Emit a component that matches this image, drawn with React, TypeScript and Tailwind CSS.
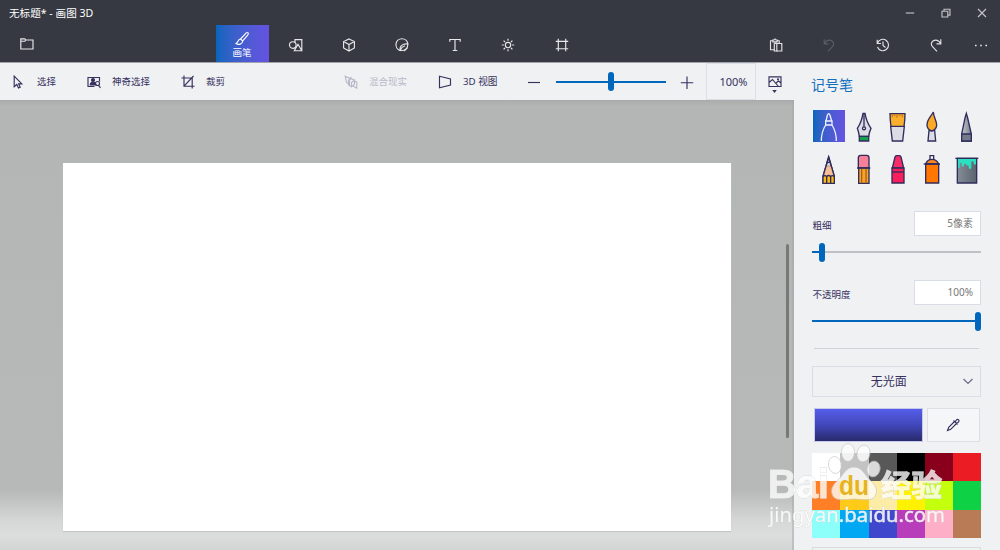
import { ReactNode } from 'react'

type SliderProps = {
  value: string
  fill: string
}

const TOP_ICONS: ReactNode[] = [
  // 2D shapes
  <>
    <circle cx="4.800" cy="8" r="3.300" />
    <path d="M7 5.600V2.600h6.800V13M10 7.300L6.300 13.700h7.500z" />
  </>,
  // 3D shapes
  <path d="M8 2l5.400 2.600v6.400L8 14l-5.400-3V4.600zM2.600 4.600L8 7.500l5.400-2.900M8 7.500V14" />,
  // stickers
  <>
    <path d="M6.500 13.600A6 6 0 1 1 13.900 7" />
    <path d="M6.200 13.400c-1-4 2.500-7.200 7.700-6.400 0 4.500-3 7.200-7.700 6.400zM6.200 13.400C7 11.500 9 9.500 11 8.800" />
    <path d="M10 14.200l3.600-3.600" />
  </>,
  // text
  <path d="M2.800 4.700V2.500h10.400v2.200M8 2.500v11M5.700 13.500h4.600" />,
  // effects
  <>
    <circle cx="8" cy="8" r="2.700" />
    <path d="M8 1.800v2M8 12.200v2M1.800 8h2M12.200 8h2M3.600 3.600L5 5M11 11l1.400 1.400M12.400 3.600L11 5M5 11l-1.400 1.400" />
  </>,
  // canvas
  <path d="M4.300 1.800v2.500H1.800M11.700 1.800v2.500h2.500M4.300 14.200v-2.500H1.800M11.700 14.200v-2.500h2.500M4.300 4.300h7.400v7.400H4.300z" />,
]

const ACTION_ICONS: { color: string; art: ReactNode }[] = [
  {
    color: 'text-[#e2e2e5]',
    art: (
      <>
        <path d="M6 12.700H2.500V3.700h2.300M9 3.700h2.200v2.500M4.800 4.800V3h1.200q1-2 2 0H9.200v1.800zM6.300 6.300v7.700h3.200M6.300 6.300h2.500" />
        <path d="M8.800 6.500h5v7.500h-5z" />
      </>
    ),
  },
  {
    color: 'text-[#5b5d66]',
    art: <path d="M3.200 2.300v4.500h4.300M3.500 6.500C5 3.300 8.500 2.300 10.700 3.800c2.500 1.700 2.500 4 .8 5.800L7 14.300" />,
  },
  {
    color: 'text-[#e2e2e5]',
    art: (
      <>
        <path d="M2.200 2.700v3.800H6M2.500 6a5.700 5.700 0 1 1 0 4" />
        <path d="M8 4.500v4l2.500 2" />
      </>
    ),
  },
  {
    color: 'text-[#e2e2e5]',
    art: <path d="M12.800 2.300v4.500H8.500M12.500 6.500C11 3.300 7.500 2.300 5.300 3.800c-2.500 1.700-2.500 4-.8 5.800L9 14.300" />,
  },
]

const PENS: ReactNode[] = [
  // marker
  <g stroke="#eef0ff" fill="none">
    <path d="M39 33l4-17q4-10 8 0l5 17M38 33h19v12H38zM38 45C28 61 25 75 25 93M57 45c10 16 13 30 13 48" />
  </g>,
  // fountain pen
  <>
    <path d="M45 10h6c3 19 9 32 18 45-4 8-6 16-7 24H34c-1-8-3-16-6-24 9-13 14-26 17-45z" fill="#dcdce4" />
    <path d="M48 10v40" />
    <circle cx="48" cy="55" r="4.500" fill="#fff" />
    <path d="M34 79h28v14H34z" fill="#13a34a" />
  </>,
  // oil brush
  <>
    <path d="M26 49l5 44h31l5-44z" fill="#dcdce4" />
    <path d="M24 11h45c0 15-1 26-3 38H27c-2-12-3-23-3-38z" fill="#fbb02d" />
    <path d="M31 13v9M38 13v6M45 13v10M53 13v6M61 13v9" stroke="#c97c22" />
  </>,
  // watercolor brush
  <>
    <path d="M39 62l-3 31h23l-3-31z" fill="#dcdce4" />
    <path d="M52 6c-6 13-19 21-19 39 0 9 5 15 14 18 10-3 15-9 15-18 0-14-9-22-10-39z" fill="#fbaa27" />
  </>,
  // pixel pen
  <>
    <path d="M46 10l-4 14-10 48v21h29V72L50 24z" fill="url(#steel)" />
    <path d="M32 72h29v21H32z" fill="#747b89" />
  </>,
  // pencil
  <>
    <path d="M47 12L30 70v21h34V70z" fill="#dcdce4" />
    <path d="M39 38q4 4 8 0 4 4 8 0l9 33H30z" fill="#f7bd97" stroke="#a0705d" strokeWidth="2" />
    <path d="M30 71q6-6 11 0 6-7 12 0 5-6 11 0v20H30z" fill="#fdb913" />
    <path d="M47 12L30 70M47 12l17 58M47 12l-5 16h10zM41 71v20M53 71v20" />
  </>,
  // eraser
  <>
    <path d="M31 45V14q0-7 7-7h18q7 0 7 7v31z" fill="#f77f98" />
    <path d="M32 45h31v46H32z" fill="#fca41f" />
    <path d="M41 46v45M54 46v45" stroke="#9c6138" />
    <path d="M27 45h40" />
  </>,
  // crayon
  <>
    <path d="M31 45l8-33q1-4 5-4h8q4 0 5 4l8 33z" fill="#f72c66" />
    <path d="M30 45h36v45H30z" fill="#fb1e5d" />
    <path d="M30 57h36" />
  </>,
  // spray can
  <>
    <path d="M42 8h11v13H42z" fill="#fff" />
    <path d="M29 33q5-14 19-14t20 14z" fill="#fb8426" />
    <path d="M29 33h39v57H29z" fill="#ff7600" />
    <path d="M23 33h49" />
  </>,
  // fill bucket
  <>
    <path d="M19 16h58v74H19z" fill="url(#bucket)" />
    <path
      d="M21 17h54v15q-4 6-7 0v-5q-4-5-7 0v18q-4 6-8 0v-6q-4-5-7 0v-5q-4-4-7 0v5q-4 5-7 0v-8q-4-4-6 0v14l-5-1z"
      fill="#2be0c0"
      stroke="none"
    />
    <path d="M13 16h69" />
  </>,
]

const PALETTE = [
  'bg-white',
  'bg-[#c3c3c3]',
  'bg-[#585858]',
  'bg-black',
  'bg-[#88001b]',
  'bg-[#ec1c24]',
  'bg-[#ff7f27]',
  'bg-[#ffca18]',
  'bg-[#fdeca6]',
  'bg-[#fff200]',
  'bg-[#c4ff0e]',
  'bg-[#0ed145]',
  'bg-[#8cfffb]',
  'bg-[#00a8f3]',
  'bg-[#3f48cc]',
  'bg-[#b83dba]',
  'bg-[#ffaec8]',
  'bg-[#b97a56]',
]

const Icon = ({ children, className = '' }: { children: ReactNode; className?: string }) => (
  <svg
    viewBox="0 0 16 16"
    fill="none"
    stroke="currentColor"
    strokeWidth="1.150"
    className={`h-4 w-4 shrink-0 ${className}`}
  >
    {children}
  </svg>
)

const Slider = ({ value, fill }: SliderProps) => (
  <div className="relative h-5 w-full">
    <div className="absolute top-[9px] h-[2px] w-full bg-[#bfc0c3]" />
    <div className="absolute top-[9px] h-[2px] bg-[#0067bd]" style={{ width: fill }} />
    <div className="absolute top-[0.500px] h-[19px] w-[6.500px] rounded-full bg-[#0067bd]" style={{ left: value }} />
  </div>
)

const Header = () => (
  <header className="h-[62px] shrink-0 bg-[#373942] text-[#e8e8ea]">
    <div className="flex h-[25px] items-center justify-between pt-[2px] pl-[9px]">
      <h1 className="text-[10.600px] leading-none text-white">无标题* - 画图 3D</h1>
      <div className="flex pr-[0.500px] pb-[2px] text-[#c2c3c7]">
        {[
          <path key="min" d="M3.800 8h8.400" />,
          <path key="max" d="M4 6.200h5.800V12H4zM6 6V4.200h6v5.900h-2" />,
          <path key="close" d="M4 4l8 8M12 4l-8 8" />,
        ].map((art, i) => (
          <div key={i} className="flex w-9 justify-center">
            <Icon>{art}</Icon>
          </div>
        ))}
      </div>
    </div>
    <nav className="flex h-[37px] items-center">
      <div className="w-[215.500px] pl-[18.500px]">
        <Icon>
          <path d="M1.800 2.800h4l1 1.200h7.200v9H1.800zM1.800 5.200h4l1-1.200" />
        </Icon>
      </div>
      <div className="flex h-full w-[53px] flex-col items-center bg-linear-to-r from-[#0565bd] to-[#6552e2] pt-[5.500px] text-white">
        <Icon>
          <path d="M14 1.800c.8.700.3 1.600-.3 2.400L8.700 10 6.500 8 12 2.200c.6-.6 1.400-1 2-.4zM6.500 8C4 8 4.500 11 2 12.500c2.500 1.800 6.500.8 6.700-2.500" />
        </Icon>
        <span className="mt-[1px] text-[9.500px] leading-none">画笔</span>
      </div>
      {TOP_ICONS.map((art, i) => (
        <div key={i} className="flex w-[53.200px] justify-center pt-[3px] pl-[1px]">
          <Icon>{art}</Icon>
        </div>
      ))}
      <div className="ml-auto flex items-center pt-[2px]">
        {ACTION_ICONS.map(({ color, art }, i) => (
          <div key={i} className={`flex w-[53.300px] justify-center ${color}`}>
            <Icon>{art}</Icon>
          </div>
        ))}
        <div className="flex w-[37.500px] justify-center">
          <Icon>
            <path d="M2 8.500h1.600M7.200 8.500h1.600M12.400 8.500H14" strokeWidth="1.600" />
          </Icon>
        </div>
      </div>
    </nav>
  </header>
)

const Toolbar = () => (
  <div className="flex h-[38px] shrink-0 items-center border-t border-[#a3a4aa] bg-[#f0f1f3] text-[9.500px] leading-none text-[#37315f]">
    <div className="flex w-[75px] items-center gap-[11px] pl-[10px]">
      <Icon>
        <path d="M4.200 2.200v10.600l2.600-2.300 1.700 3.500 1.700-.8-1.600-3.400h3.200z" />
      </Icon>
      <span>选择</span>
    </div>
    <div className="flex w-[95px] items-center gap-[10px] pl-[11px]">
      <Icon>
        <path d="M8.500 12.500H2v-9h11.500v4" />
        <circle cx="7" cy="6" r="1.500" fill="currentColor" />
        <path d="M4.200 11q.3-3 2.800-3t3 3z" fill="currentColor" />
        <circle cx="11.500" cy="9.500" r="2" />
        <path d="M12.500 11.300l2 2.500" />
      </Icon>
      <span>神奇选择</span>
    </div>
    <div className="flex w-[173px] items-center gap-[10px] pl-[10px]">
      <Icon>
        <path d="M4 1.500v10.700h10.500M1.500 4h10.700v10.500M4.500 11.700l9-9.700" />
      </Icon>
      <span>裁剪</span>
    </div>
    <div className="flex w-[92px] items-center gap-[10px] text-[#b9b8c9]">
      <Icon>
        <path d="M2.200 2.200l4.300 2v6.300L3.500 8.500zM6.500 4.200L8.500 3.300M5.500 6l3-1.300 3 1.500M5.500 6v5l3 1.700M8.500 8.500l3-2.300v4l-3 2.500zM11.500 7l2.300 1.200v6L10 12" />
      </Icon>
      <span>混合现实</span>
    </div>
    <div className="flex w-[91px] items-center gap-[10px] pl-[2px]">
      <Icon>
        <path d="M2.500 2.200l11 2.700v6.200l-11 2.700z" />
      </Icon>
      <span className="text-[9.700px]">3D 视图</span>
    </div>
    <Icon>
      <path d="M2 8.500h12" />
    </Icon>
    <div className="mr-[13.500px] ml-[14px] w-[109.500px]">
      <Slider value="51.5px" fill="100%" />
    </div>
    <Icon>
      <path d="M1.800 8.700h12.400M8 2.500v12.400" />
    </Icon>
    <div className="ml-[10.500px] flex h-full w-[50px] items-center justify-end border border-[#dcdfe8] pr-[7px] text-[11px]">
      100%
    </div>
    <div className="flex flex-1 flex-col items-center pt-1">
      <Icon>
        <path d="M2 2.800h12v9.700H2zM2 8.500l3.500-3 6 7M9 9l2.500-2L14 9" />
        <circle cx="11" cy="5.300" r=".5" />
      </Icon>
      <svg viewBox="0 0 6 4" className="h-[3px] w-[5px] fill-current">
        <path d="M0 0h6L3 4z" />
      </svg>
    </div>
  </div>
)

const ValueRow = ({ label, value }: { label: string; value: string }) => (
  <div className="flex h-[25px] items-center justify-between">
    <span className="pt-[5px] text-[9.500px] text-[#37315f]">{label}</span>
    <div className="flex h-[25px] w-[67px] items-center justify-end border border-[#d9dde8] bg-white pr-[7px] text-[10px] text-[#777]">
      {value}
    </div>
  </div>
)

const SidePanel = () => (
  <aside className="h-[488px] w-[206px] shrink-0 overflow-hidden border-t border-[#a3a4aa] bg-[#f0f1f3] pr-[19px] pl-[18.400px]">
    <h2 className="-ml-[1.500px] pt-[13px] text-[14px] leading-[18px] text-[#1470bd]">记号笔</h2>

    <div className="mt-[16px] ml-[0.800px] grid w-max grid-cols-[repeat(5,32px)] gap-x-[2.400px] gap-y-[11.300px]">
      {PENS.map((art, i) => (
        <svg
          key={i}
          viewBox="0 0 96 96"
          fill="none"
          stroke="#302c5c"
          strokeWidth="4"
          className={`h-8 w-8 ${i === 0 ? 'bg-linear-to-r from-[#0565bd] to-[#6552e2]' : ''}`}
        >
          <defs>
            <linearGradient id="steel" x2="1">
              <stop offset="0" stopColor="#c5c7ce" />
              <stop offset="1" stopColor="#777e8b" />
            </linearGradient>
            <linearGradient id="bucket" x2="1">
              <stop offset="0" stopColor="#858d96" />
              <stop offset="1" stopColor="#59636f" />
            </linearGradient>
          </defs>
          {art}
        </svg>
      ))}
    </div>

    <div className="mt-[26px]">
      <ValueRow label="粗细" value="5像素" />
      <div className="mt-[6px]">
        <Slider value="6.5px" fill="10px" />
      </div>
    </div>
    <div className="mt-[18px]">
      <ValueRow label="不透明度" value="100%" />
      <div className="mt-[6px]">
        <Slider value="162.2px" fill="100%" />
      </div>
    </div>

    <div className="mx-[2px] mt-[17px] border-t border-[#d0d2d6]" />

    <div className="relative mt-[17px] flex h-[31px] items-center justify-center border border-[#d9dde8] pt-[1px] pr-4 text-[12px] text-[#37315f]">
      无光面
      <Icon className="absolute right-1 text-[#6d6989]">
        <path d="M3.500 5L8 9.500 12.500 5" />
      </Icon>
    </div>

    <div className="mt-[11px] flex h-[34px] gap-1 px-[1.500px]">
      <div className="w-[109px] border border-[#c5c9ea] bg-linear-to-b from-[#555ee9] via-[#4148bb] to-[#292a6c]" />
      <div className="flex flex-1 items-center justify-center border border-[#dcdfe4] bg-[#f5f6f8] text-[#37315f]">
        <Icon>
          <path d="M9.500 4.500L3.700 10.300 2.500 13.500l3.200-1.200 5.800-5.800M8.500 3.500l4 4M10 5l1.500-2c1.500-1.500 3.500.5 2 2l-2 1.500" />
        </Icon>
      </div>
    </div>

    <div className="mt-[11px] grid grid-cols-6">
      {PALETTE.map(color => (
        <div key={color} className={`h-[28.200px] ${color}`} />
      ))}
    </div>
    <div className="mt-[9px] h-8 border border-[#d9dde0]" />
  </aside>
)

const Watermark = () => (
  <svg viewBox="0 0 190 90" className="absolute top-[440px] left-[764px] h-[90px] w-[190px]" fill="#fff">
    <g opacity=".78" stroke="#c4c4c4" strokeWidth=".8">
      <ellipse cx="71" cy="25" rx="6.500" ry="8.500" transform="rotate(-10 71 25)" />
      <ellipse cx="84" cy="12.500" rx="6.500" ry="9" />
      <ellipse cx="99.500" cy="13.500" rx="6.500" ry="8.500" transform="rotate(12 99.500 13.500)" />
      <ellipse cx="109.500" cy="29" rx="6.500" ry="8" transform="rotate(15 109.500 29)" />
      <path d="M90 27c8 0 11 8 15 12 5 5 9 9 7 15-2 7-9 6-22 5-13 1-20 2-22-5-2-6 2-10 7-15 4-4 7-12 15-12z" />
    </g>
    <g className="font-bold drop-shadow-[0_0_0.500px_#999]" opacity=".78">
      <text
        x="4"
        y="58"
        fontSize="40"
        textLength="61"
        lengthAdjust="spacingAndGlyphs"
        stroke="#fff"
        className="font-['Liberation_Sans',sans-serif]"
      >
        Bai
      </text>
      <text x="117" y="56" fontSize="30" textLength="61" lengthAdjust="spacingAndGlyphs" stroke="#fff" strokeWidth="1.200">
        经验
      </text>
    </g>
    <text
      x="75"
      y="55"
      fontSize="27"
      textLength="30"
      lengthAdjust="spacingAndGlyphs"
      fill="#e6b422"
      className="font-['Liberation_Sans',sans-serif] font-bold"
    >
      du
    </text>
    <text
      x="5"
      y="82"
      fontSize="20"
      textLength="176"
      lengthAdjust="spacingAndGlyphs"
      opacity=".85"
      stroke="#fff"
      strokeWidth=".4"
      className="drop-shadow-[0_0_0.500px_#999]"
    >
      jingyan.baidu.com
    </text>
  </svg>
)

export default function App() {
  return (
    <div className="relative flex h-[550px] w-[1000px] flex-col overflow-hidden font-['Noto_Sans','Noto_Sans_CJK_SC',sans-serif]">
      <Header />
      <div className="flex flex-1">
        <div className="flex w-[794px] flex-col">
          <Toolbar />
          <main className="relative h-[450px] bg-[linear-gradient(#a9acaa_0px,#b3b6b4_6px,#b7b9b8_390px,#d5d6d6_420px,#dcdddd_435px,#d3d4d4_450px)] pt-[63px] pl-[62.500px]">
            <div className="h-[368px] w-[668.500px] bg-white shadow-[0_1px_1px_#c5c6c6]" />
            <div className="absolute top-[144px] right-[5px] h-[194px] w-[3px] rounded-full bg-[#777978]" />
            <div className="absolute top-0 right-0 h-full w-[2px] bg-[#a5a7a6]/50" />
          </main>
        </div>
        <SidePanel />
      </div>
      <Watermark />
    </div>
  )
}
